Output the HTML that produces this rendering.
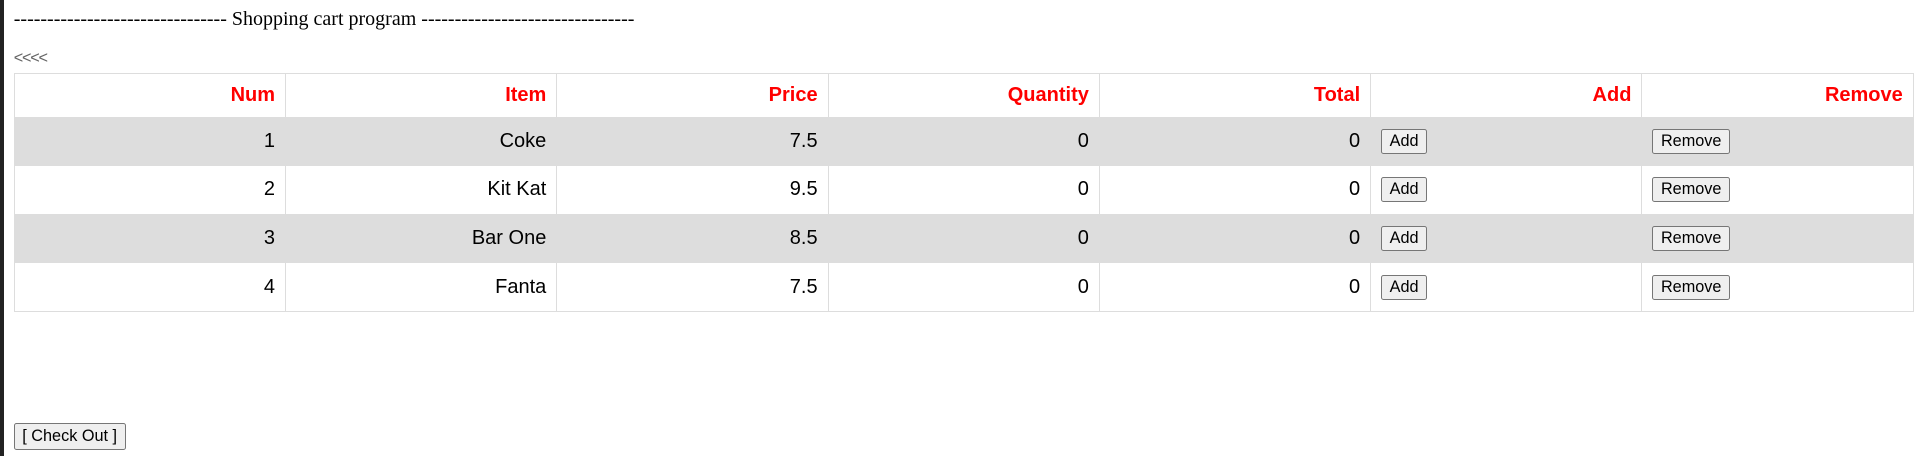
<!DOCTYPE html>
<html><head><meta charset="utf-8"><style>
html{zoom:1.25}
body{margin:0;width:1538px;height:365px;background:#fff;position:relative;overflow:hidden;font-family:"Liberation Serif",serif}
.bar{position:absolute;left:0;top:0;width:3px;height:365px;background:#222}
.title{position:absolute;left:11px;top:6px;font-size:16px;line-height:18px;white-space:pre}
.back{position:absolute;left:11px;top:39px;font-size:13px;color:#666;font-family:"Liberation Sans",sans-serif;letter-spacing:-1px}
table{position:absolute;left:11px;top:58px;width:1520px;border-collapse:collapse;border:1px solid #ddd;font-family:"Liberation Sans",sans-serif;font-size:16px;table-layout:fixed}
td,th{border-left:1px solid #ddd;text-align:right;padding:0 8px;height:39px;box-sizing:border-box}
th{color:#f00;font-weight:bold;height:35px}
tr.g td{background:#ddd}
td.b{text-align:left;padding-left:8px}
button{font-family:"Liberation Sans",sans-serif;font-size:13px;background:#efefef;border:1px solid #767676;border-radius:2px;padding:1px 6px;height:20px;color:#000}
.co{position:absolute;left:11px;top:338px;height:22px}
</style></head><body>
<div class="bar"></div>
<div class="title">-------------------------------- Shopping cart program --------------------------------</div>
<div class="back">&lt;&lt;&lt;&lt;</div>
<table>
<tr><th>Num</th><th>Item</th><th>Price</th><th>Quantity</th><th>Total</th><th>Add</th><th>Remove</th></tr>
<tr class="g"><td>1</td><td>Coke</td><td>7.5</td><td>0</td><td>0</td><td class="b"><button>Add</button></td><td class="b"><button>Remove</button></td></tr>
<tr><td>2</td><td>Kit Kat</td><td>9.5</td><td>0</td><td>0</td><td class="b"><button>Add</button></td><td class="b"><button>Remove</button></td></tr>
<tr class="g"><td>3</td><td>Bar One</td><td>8.5</td><td>0</td><td>0</td><td class="b"><button>Add</button></td><td class="b"><button>Remove</button></td></tr>
<tr><td>4</td><td>Fanta</td><td>7.5</td><td>0</td><td>0</td><td class="b"><button>Add</button></td><td class="b"><button>Remove</button></td></tr>
</table>
<button class="co">[ Check Out ]</button>
</body></html>
